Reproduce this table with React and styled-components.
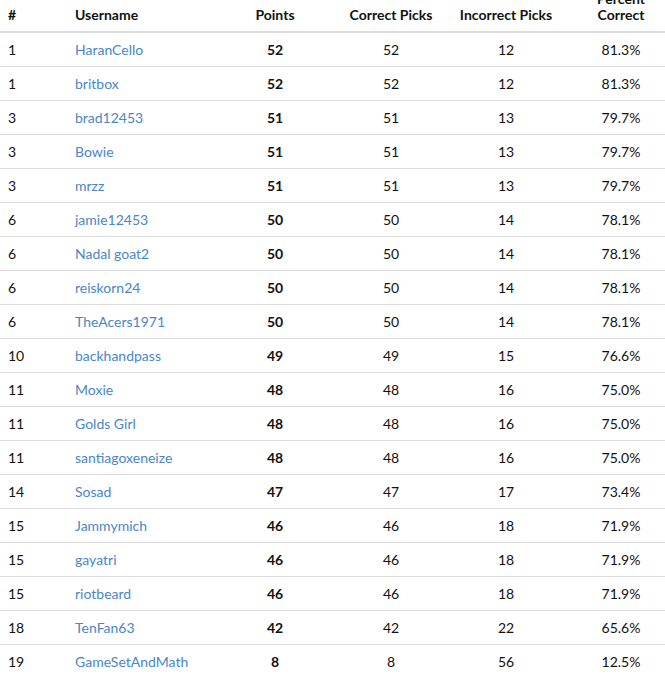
import React from "react";
import styled, { createGlobalStyle } from "styled-components";

const Global = createGlobalStyle`
  html, body { margin: 0; padding: 0; background: #fff; }
  body { font-family: Lato, "Open Sans", Arial, sans-serif; font-size: 14px; color: #111; overflow: hidden; }
`;

const COLS = "67px 164px 88px 144px 86px 116px";

const Table = styled.div`
  width: 665px;
  margin-top: -17px;
`;

const HeadRow = styled.div`
  display: grid;
  grid-template-columns: ${COLS};
  border-bottom: 2px solid #dddddd;
`;

const Row = styled.div`
  display: grid;
  grid-template-columns: ${COLS};
  height: 33px;
  border-bottom: ${(p) => (p.$last ? "none" : "1px solid #dddddd")};
`;

const HeadCell = styled.div`
  display: flex;
  align-items: flex-end;
  justify-content: ${(p) => (p.$center ? "center" : "flex-start")};
  text-align: ${(p) => (p.$center ? "center" : "left")};
  padding: 8px 8px 8px ${(p) => (p.$shift ? 36 : 8)}px;
  font-weight: 700;
  line-height: 16px;
  color: #111;
  white-space: nowrap;
`;

const Cell = styled.div`
  display: flex;
  align-items: center;
  justify-content: ${(p) => (p.$center ? "center" : "flex-start")};
  padding: 0 8px 0 ${(p) => (p.$shift ? 36 : 8)}px;
  font-weight: ${(p) => (p.$bold ? 700 : 400)};
  white-space: nowrap;
  color: #111;
`;

const UserLink = styled.a`
  color: #4a86c8;
  text-decoration: none;
`;

const data = [
  [1, "HaranCello", 52, 52, 12, "81.3%"],
  [1, "britbox", 52, 52, 12, "81.3%"],
  [3, "brad12453", 51, 51, 13, "79.7%"],
  [3, "Bowie", 51, 51, 13, "79.7%"],
  [3, "mrzz", 51, 51, 13, "79.7%"],
  [6, "jamie12453", 50, 50, 14, "78.1%"],
  [6, "Nadal goat2", 50, 50, 14, "78.1%"],
  [6, "reiskorn24", 50, 50, 14, "78.1%"],
  [6, "TheAcers1971", 50, 50, 14, "78.1%"],
  [10, "backhandpass", 49, 49, 15, "76.6%"],
  [11, "Moxie", 48, 48, 16, "75.0%"],
  [11, "Golds Girl", 48, 48, 16, "75.0%"],
  [11, "santiagoxeneize", 48, 48, 16, "75.0%"],
  [14, "Sosad", 47, 47, 17, "73.4%"],
  [15, "Jammymich", 46, 46, 18, "71.9%"],
  [15, "gayatri", 46, 46, 18, "71.9%"],
  [15, "riotbeard", 46, 46, 18, "71.9%"],
  [18, "TenFan63", 42, 42, 22, "65.6%"],
  [19, "GameSetAndMath", 8, 8, 56, "12.5%"],
];

export default function App() {
  return (
    <>
      <Global />
      <Table>
        <HeadRow>
          <HeadCell>#</HeadCell>
          <HeadCell>Username</HeadCell>
          <HeadCell $center>Points</HeadCell>
          <HeadCell $center>Correct Picks</HeadCell>
          <HeadCell $center>Incorrect Picks</HeadCell>
          <HeadCell $center $shift>
            Percent
            <br />
            Correct
          </HeadCell>
        </HeadRow>
        {data.map((r, i) => (
          <Row key={i} $last={i === data.length - 1}>
            <Cell>{r[0]}</Cell>
            <Cell>
              <UserLink href="#">{r[1]}</UserLink>
            </Cell>
            <Cell $center $bold>{r[2]}</Cell>
            <Cell $center>{r[3]}</Cell>
            <Cell $center>{r[4]}</Cell>
            <Cell $center $shift>{r[5]}</Cell>
          </Row>
        ))}
      </Table>
    </>
  );
}
